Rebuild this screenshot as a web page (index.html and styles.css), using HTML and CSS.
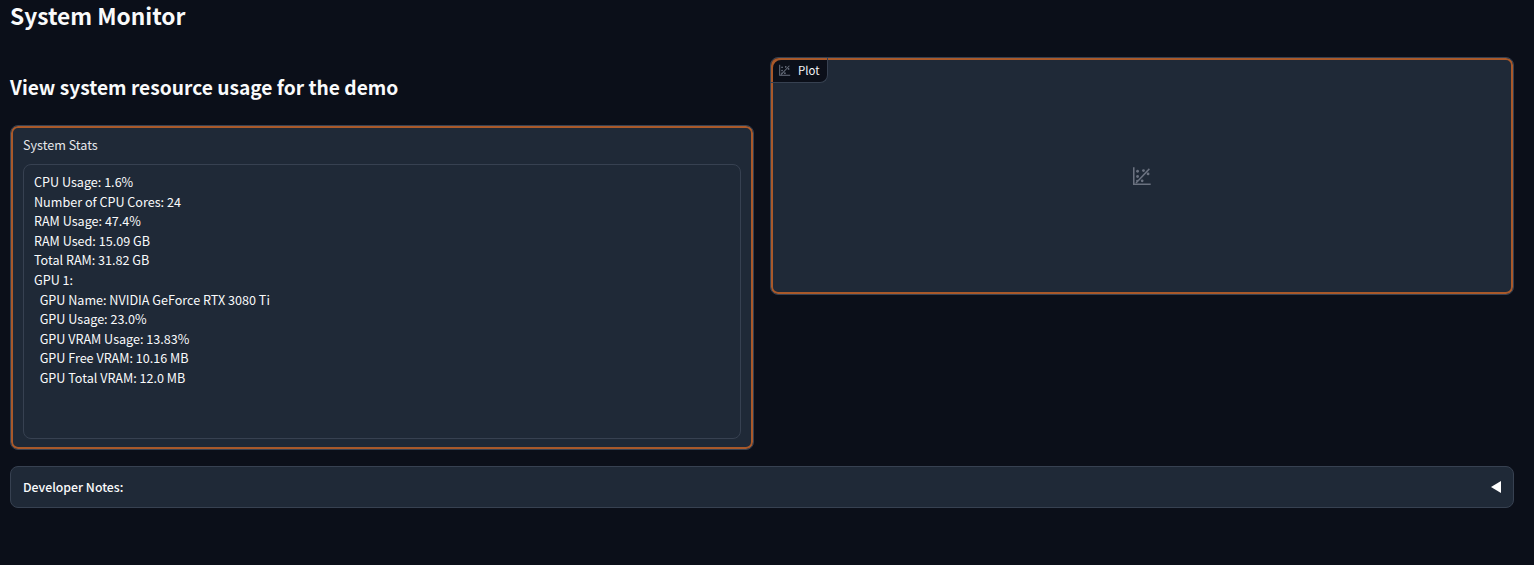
FILE: index.html

```html
<!DOCTYPE html>
<html lang="en">
<head>
  <meta charset="UTF-8">
  <meta name="viewport" content="width=device-width, initial-scale=1.0">
  <title>System Monitor</title>
  <link rel="stylesheet" href="styles.css">
</head>
<body>
  <h1 class="page-title">System Monitor</h1>

  <div class="row">
    <!-- Left column -->
    <div class="col">
      <h2 class="sub-title">View system resource usage for the demo</h2>
      <div class="panel stats-panel">
        <label class="stats-label">System Stats</label>
        <div class="stats-box">CPU Usage: 1.6%
Number of CPU Cores: 24
RAM Usage: 47.4%
RAM Used: 15.09 GB
Total RAM: 31.82 GB
GPU 1:
  GPU Name: NVIDIA GeForce RTX 3080 Ti
  GPU Usage: 23.0%
  GPU VRAM Usage: 13.83%
  GPU Free VRAM: 10.16 MB
  GPU Total VRAM: 12.0 MB</div>
      </div>
    </div>

    <!-- Right column -->
    <div class="col">
      <div class="panel plot-panel">
        <div class="plot-tag">
          <svg class="plot-tag-icon" viewBox="0 0 32 32" fill="currentColor">
            <use href="#icon-plot"></use>
          </svg>
          Plot
        </div>
        <svg class="plot-icon" viewBox="0 0 32 32" fill="currentColor">
          <use href="#icon-plot"></use>
        </svg>
      </div>
    </div>
  </div>

  <div class="notes">
    <span class="notes-title">Developer Notes:</span>
    <span class="notes-arrow"></span>
  </div>

  <svg class="icon-defs" xmlns="http://www.w3.org/2000/svg">
    <symbol id="icon-plot" viewBox="0 0 32 32">
      <path d="M3 2h2.4v24.6H30V29H3z"/>
      <path d="M6.8 25.2 27.2 3.6l1.6 1.6L8.4 26.8z"/>
      <circle cx="10" cy="8" r="2.1"/>
      <circle cx="10" cy="16" r="2.1"/>
      <circle cx="9.5" cy="22.5" r="1.7"/>
      <circle cx="17" cy="22.5" r="2.1"/>
      <circle cx="26" cy="12" r="2.1"/>
      <circle cx="19" cy="7" r="2.1"/>
    </symbol>
  </svg>
</body>
</html>
```

FILE: styles.css

```css
html, body {
  height: 100%;
}
body {
  margin: 0;
  padding: 0 20px 0 10px;
  box-sizing: border-box;
  overflow: hidden;
  background-color: #0b0f19;
  color: #f3f4f6;
  font-family: "Noto Sans CJK SC", "Noto Sans", sans-serif;
}
.page-title {
  margin: 0;
  padding-top: 1px;
  font-size: 22.7px;
  line-height: 30px;
  font-weight: 600;
  color: #f9fafb;
}
.row {
  display: flex;
  gap: 16px;
  margin-top: 26px;
  align-items: flex-start;
}
.col {
  flex: 1;
  min-width: 0;
}
.sub-title {
  margin: 16px 0 0;
  font-size: 19.2px;
  line-height: 28px;
  font-weight: 600;
  color: #f9fafb;
}
.panel {
  box-sizing: border-box;
  background-color: #1f2937;
  border: 1px solid #374151;
  border-radius: 8px;
  box-shadow: inset 0 0 0 2px #a9592a;
  position: relative;
}
.stats-panel {
  margin-top: 24px;
  height: 325px;
  padding: 10px 12px 10px;
  display: flex;
  flex-direction: column;
}
.stats-label {
  font-size: 12.6px;
  line-height: 18px;
  color: #e5e7eb;
  margin-bottom: 10px;
}
.stats-box {
  flex: 1;
  box-sizing: border-box;
  border: 1px solid #374151;
  border-radius: 8px;
  padding: 7px 10px;
  font-size: 12.6px;
  line-height: 19.6px;
  white-space: pre-wrap;
  color: #f9fafb;
}
.plot-panel {
  height: 238px;
  display: flex;
  align-items: center;
  justify-content: center;
  overflow: hidden;
}
.plot-tag {
  position: absolute;
  top: 0;
  left: 0;
  display: flex;
  align-items: center;
  gap: 7px;
  height: 24px;
  padding: 0 8px 0 7px;
  font-size: 11.4px;
  color: #f3f4f6;
  background-color: #0b0f19;
  border: 1px solid #374151;
  border-width: 0 1px 1px 0;
  border-radius: 8px 0 8px 0;
  box-shadow: inset 2px 2px 0 #a9592a;
}
.plot-tag-icon {
  width: 13px;
  height: 13px;
  color: #6b7280;
}
.plot-icon {
  width: 21px;
  height: 21px;
  margin: 1px 1px 0 0;
  color: #6b7280;
}
.notes {
  box-sizing: border-box;
  display: flex;
  align-items: center;
  justify-content: space-between;
  height: 42px;
  margin-top: 16px;
  padding: 0 12px;
  background-color: #1f2937;
  border: 1px solid #374151;
  border-radius: 8px;
}
.notes-title {
  font-size: 12.3px;
  font-weight: 500;
  color: #f9fafb;
}
.notes-arrow {
  width: 0;
  height: 0;
  border-top: 6px solid transparent;
  border-bottom: 6px solid transparent;
  border-right: 10px solid #fff;
}
.icon-defs {
  display: none;
}
```
